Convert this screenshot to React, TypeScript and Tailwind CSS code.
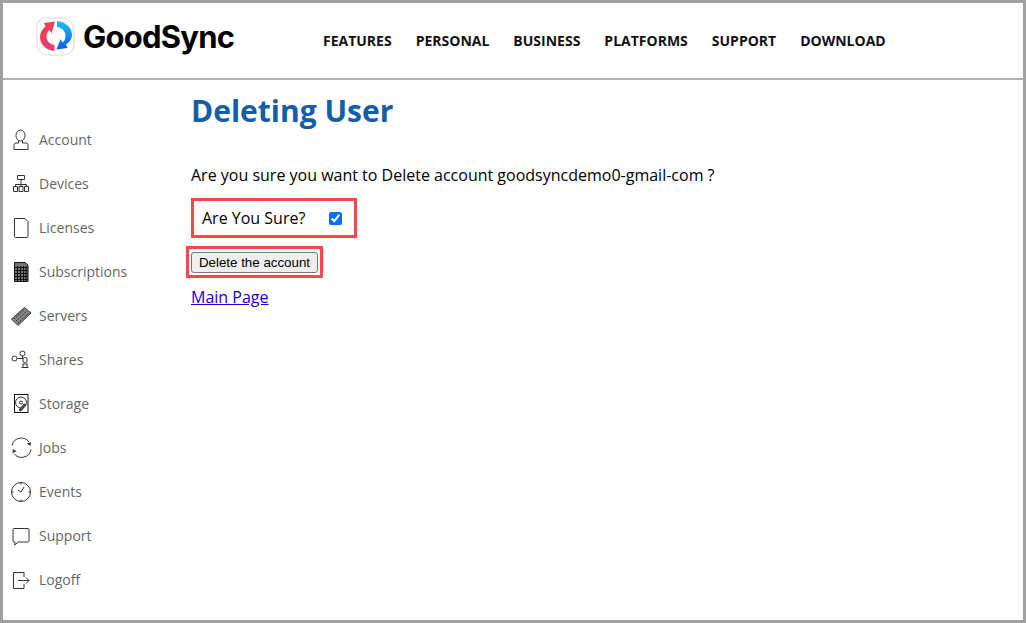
import React from "react";

const S = { fill: "none", stroke: "#333", strokeWidth: 1 };

const icons: Record<string, React.ReactNode> = {
  Account: (
    <svg width="22" height="22" viewBox="0 0 22 22" {...S}>
      <ellipse cx="10.500" cy="6.500" rx="4.500" ry="5.500" />
      <path d="M8.500 12v2H6c-1.500 0-2 1-2 2v4.500h14V16c0-1-.5-2-2-2h-3.500v-2" />
    </svg>
  ),
  Devices: (
    <svg width="22" height="22" viewBox="0 0 22 22" {...S}>
      <path d="M7.500 2.500h7v4h-7zM11 6.500V13M5.500 13.500v-2h11v2M3.500 13.500h4v5h-4zM9 13.500h4v5H9zM14.500 13.500h4v5h-4z" />
    </svg>
  ),
  Licenses: (
    <svg width="22" height="22" viewBox="0 0 22 22" {...S}>
      <path d="M4.500 1.500h10.500l3 3v15c0 .5-.5 1-1 1H5.500c-.5 0-1-.5-1-1z" />
    </svg>
  ),
  Subscriptions: (
    <svg width="22" height="22" viewBox="0 0 22 22" fill="none" stroke="#111" strokeWidth="1">
      <path d="M4.500 1.500h10.500l3 2.500v16.500H4.500z" fill="#777" />
      <path d="M4.500 6.500h13.500M4.500 9.500h13.500M4.500 12.500h13.500M4.500 15.500h13.500M4.500 18.500h13.500M7.500 5v15.500M10.500 5v15.500M13.500 5v15.500M16 5v15.500" />
    </svg>
  ),
  Servers: (
    <svg width="22" height="22" viewBox="0 0 22 22" fill="none" stroke="#333">
      <path d="M1.500 14 14.500 2.500 21 8 8 20.500z" fill="#888" />
      <path d="M4 14l10.500-9.500M6 16 16.500 6.500M8 18 18.500 8.500" stroke="#222" strokeDasharray="1.500 1" />
    </svg>
  ),
  Shares: (
    <svg width="22" height="22" viewBox="0 0 22 22" {...S}>
      <circle cx="4.500" cy="9.500" r="2.500" />
      <circle cx="12.500" cy="4.500" r="2.500" />
      <path d="M7 9.500h6M12.500 7v2.500" />
      <rect x="13" y="8.500" width="4" height="5" rx="1.500" />
      <path d="M12.500 15h5M11.500 18.500h7M13 15v3.500M17 15v3.500" />
    </svg>
  ),
  Storage: (
    <svg width="22" height="22" viewBox="0 0 22 22" {...S}>
      <rect x="4.500" y="1.500" width="13.500" height="18" stroke="#111" />
      <circle cx="11" cy="9.500" r="5.500" />
      <circle cx="11" cy="9.500" r="1.500" />
      <path d="M9 17l5-6 2 1-5 6z" fill="#555" />
    </svg>
  ),
  Jobs: (
    <svg width="22" height="22" viewBox="0 0 22 22" {...S}>
      <path d="M2 8.500A9.500 9.500 0 0 1 19 5" />
      <path d="M21 12.500A9.500 9.500 0 0 1 4 16.500" />
      <path d="M17 6.500l4-1.500-.5 4zM6.500 14.500l-4 1.500.5-4z" fill="#333" stroke="none" />
    </svg>
  ),
  Events: (
    <svg width="22" height="22" viewBox="0 0 22 22" {...S}>
      <circle cx="11" cy="11" r="9.500" />
      <path d="M11 11l3-5M11 11 8 9M11 1.500v2M11 18.500v2M1.500 11h2M18.500 11h2" />
    </svg>
  ),
  Support: (
    <svg width="22" height="22" viewBox="0 0 22 22" {...S}>
      <path d="M4 3.500h14c.5 0 1 .5 1 1v11.500c0 .5-.5 1-1 1H8.500L4.500 20c.5-1 .5-2 .5-3h-1c-.5 0-1-.5-1-1V4.500c0-.5.5-1 1-1z" />
    </svg>
  ),
  Logoff: (
    <svg width="22" height="22" viewBox="0 0 22 22" {...S}>
      <path d="M14 8V3.500H3.500v16H14V15M8 11.500h11M16 8.500l3 3-3 3" />
    </svg>
  ),
};

const menu = ["Account", "Devices", "Licenses", "Subscriptions", "Servers", "Shares", "Storage", "Jobs", "Events", "Support", "Logoff"];
const nav = ["FEATURES", "PERSONAL", "BUSINESS", "PLATFORMS", "SUPPORT", "DOWNLOAD"];

function Logo() {
  return (
    <svg width="40" height="40" viewBox="-1 0 40 40">
      <defs>
        <linearGradient id="r" x1="0" y1="0" x2="0.600" y2="1">
          <stop offset="0" stopColor="#f9413c" />
          <stop offset="1" stopColor="#e0407e" />
        </linearGradient>
        <linearGradient id="b" x1="0.500" y1="0" x2="0.500" y2="1">
          <stop offset="0" stopColor="#22c0f2" />
          <stop offset="1" stopColor="#0a5cf5" />
        </linearGradient>
      </defs>
      <path d="M10 1h16c7 0 12 5 12 12v13c0 7-4 12-11 12H13C6 38 1 33 1 26V10C1 5 5 1 10 1z" fill="#fff" stroke="#ccc" strokeWidth="0.800" />
      <path d="M19 4.500 8 6l1.500 3.500C6 12 4 16 4 20c0 6.500 5 12 11.500 13.500l3 .5v-6c-4.500-.5-8-4-8-8.500 0-2.500 1-5 3-6.500l2 3.500z" fill="url(#r)" />
      <path d="M21 4v6c5 .5 8.500 4.500 8.500 9 0 2.500-1 5-3 6.500l-2-3.500-4 10.500 11-1.500-1.500-3.500C34 25 36 21 36 17.500 36 10.500 29 4.500 21 4z" fill="url(#b)" />
    </svg>
  );
}

export default function App() {
  return (
    <div className="w-[1026px] h-[623px] border-[3px] border-[#a0a0a0] bg-white flex flex-col overflow-hidden font-['Open_Sans',sans-serif]">
      <header className="h-[77px] shrink-0 border-b-2 border-[#b0b0b0] flex items-start">
        <div className="flex items-center gap-2 pl-8 pt-3.5 w-[320px]">
          <Logo />
          <span className="text-[31px] leading-9 font-bold tracking-tight text-black font-['Inter',sans-serif]">GoodSync</span>
        </div>
        <nav className="flex gap-6 pt-7 text-sm font-bold text-[#111]">
          {nav.map((n) => (
            <span key={n} className="leading-5">{n}</span>
          ))}
        </nav>
      </header>
      <div className="flex flex-1">
        <aside className="w-[188px] shrink-0 flex flex-col pt-[38px] pl-1">
          {menu.map((m) => (
            <div key={m} className="h-11 flex items-center gap-1 text-sm text-[#666]">
              <span className="w-7 flex justify-center">{icons[m]}</span>
              <span>{m}</span>
            </div>
          ))}
        </aside>
        <main className="flex-1 text-base text-black">
          <h1 className="text-3xl font-bold text-[#135ea8] mt-3.25">Deleting User</h1>
          <p className="mt-8.5">Are you sure you want to Delete account goodsyncdemo0-gmail-com ?</p>
          <div className="mt-2.75 w-[166px] h-10 border-[3px] border-[#f24a4a] flex items-center pl-2">
            <span>Are You Sure?</span>
            <input type="checkbox" defaultChecked className="ml-auto mr-3 w-3.25 h-3.25 accent-[#0a6cf5]" />
          </div>
          <div className="-ml-1.25 mt-2 w-[137px] h-8 border-[3px] border-[#f24a4a] flex items-center justify-center">
            <button className="w-[127px] h-[21px] border border-[#767676] rounded-[3px] bg-[#efefef] text-[13.33px] text-black font-['Liberation_Sans',sans-serif]">Delete the account</button>
          </div>
          <a href="#" className="block mt-1.75 text-[#2200cc] underline">Main Page</a>
        </main>
      </div>
    </div>
  );
}
